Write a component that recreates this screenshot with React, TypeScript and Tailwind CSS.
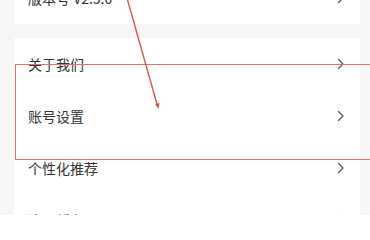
import React from "react";

function Chevron() {
  return (
    <svg width="8" height="12" viewBox="0 0 8 12" fill="none" className="shrink-0">
      <path d="M1.5 1.5 L6 6 L1.5 10.5" stroke="#555" strokeWidth="1.3" strokeLinecap="round" strokeLinejoin="round" />
    </svg>
  );
}

function Row({ label }: { label: string }) {
  return (
    <div className="flex h-[52px] items-center justify-between pl-[14px] pr-[15px]">
      <span className="text-[14px] text-[#333]">{label}</span>
      <Chevron />
    </div>
  );
}

export default function App() {
  return (
    <div
      className="relative h-[215px] w-[370px] overflow-hidden bg-[#f6f6f6]"
      style={{ fontFamily: '"Noto Sans CJK SC", "Noto Sans", sans-serif' }}
    >
      <div className="mt-[-28px] flex flex-col gap-[14px] pl-[14px] pr-[10px]">
        <div className="bg-white">
          <Row label="版本号 V2.3.0" />
        </div>
        <div className="bg-white">
          <Row label="关于我们" />
          <Row label="账号设置" />
          <Row label="个性化推荐" />
          <Row label="清理缓存" />
        </div>
      </div>
      <div className="absolute left-[15px] top-[64px] h-[96px] w-[370px] border-[1.5px] border-[#e07070]" />
      <svg className="absolute left-0 top-0" width="370" height="215">
        <line x1="127" y1="-2" x2="157.5" y2="106" stroke="#d9534f" strokeWidth="1.4" />
        <path d="M155 104 L158.5 109 L159.5 103 Z" fill="#d9534f" />
      </svg>
    </div>
  );
}
